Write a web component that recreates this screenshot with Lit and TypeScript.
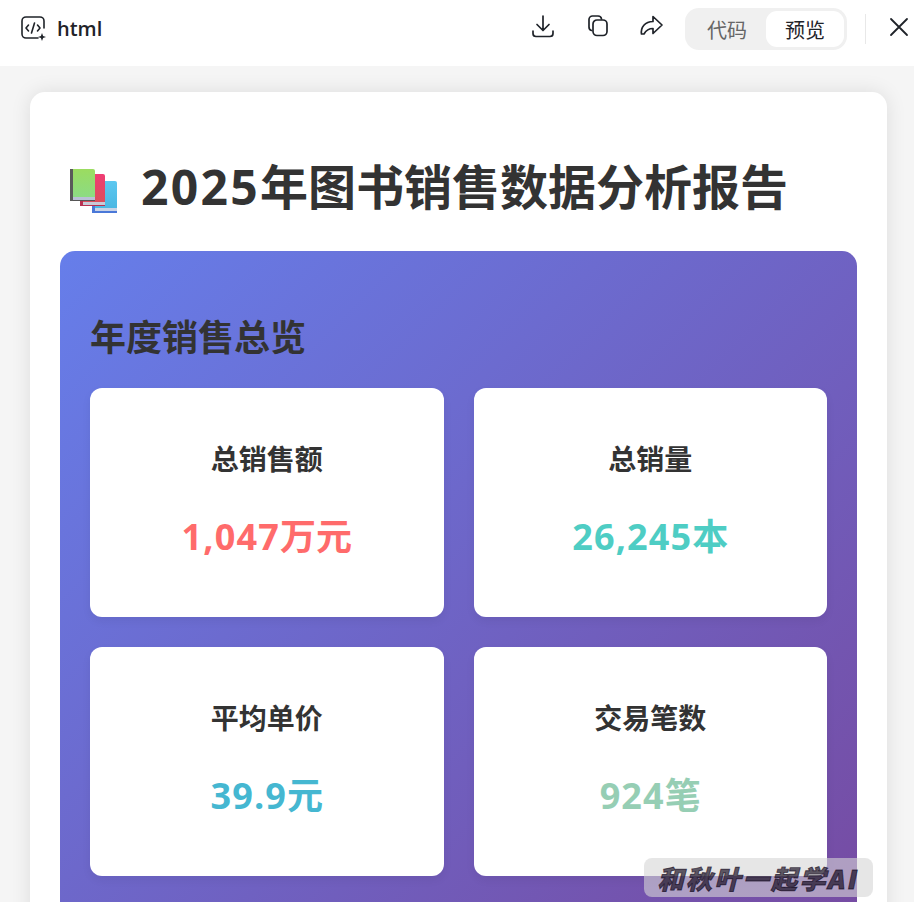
import { LitElement, html, css } from "lit";
import { customElement } from "lit/decorators.js";

const stats = [
  { label: "总销售额", num: "1,047", unit: "万元", color: "#ff6b6b" },
  { label: "总销量", num: "26,245", unit: "本", color: "#4ecdc4" },
  { label: "平均单价", num: "39.9", unit: "元", color: "#45b7d1" },
  { label: "交易笔数", num: "924", unit: "笔", color: "#96ceb4" },
];

@customElement("app-root")
export class AppRoot extends LitElement {
  static styles = css`
    :host {
      display: block;
      height: 902px;
      overflow: hidden;
      position: relative;
      background: #f5f5f5;
      font-family: "Open Sans", "Noto Sans CJK SC", sans-serif;
      color: #333;
    }
    .bar {
      height: 66px;
      background: #fff;
      display: flex;
      align-items: center;
      padding: 0 2px 8px 20px;
      box-sizing: border-box;
    }
    .file {
      display: flex;
      align-items: center;
      gap: 11px;
      font-size: 20px;
      font-weight: 600;
      color: #1f2329;
      flex: 1;
      padding-bottom: 2px;
    }
    .file svg { width: 26px; height: 26px; display: block; }
    .tools { display: flex; align-items: center; }
    .ic { width: 26px; height: 26px; display: block; fill: none; stroke: #1f2329; stroke-width: 1.7; stroke-linecap: round; stroke-linejoin: round; margin-bottom: 6px; }
    .dl { margin-right: 29px; }
    .cp { margin-right: 27px; }
    .sh { margin-right: 21px; }
    .seg {
      display: flex;
      background: #f0f0f0;
      border-radius: 14px;
      padding: 3px;
      height: 42px;
      box-sizing: border-box;
      width: 162px;
    }
    .seg span {
      flex: 1;
      display: flex;
      align-items: center;
      justify-content: center;
      font-size: 20px;
      font-family: "Noto Sans CJK SC", sans-serif;
      font-weight: 400;
      color: #666;
      border-radius: 11px;
    }
    .seg span.on { background: #fff; color: #1f2329; flex: 0 0 78px; }
    .sep { width: 1px; height: 30px; background: #e8e8e8; margin: 0 28px 0 18px; }
    .x { width: 26px; height: 26px; fill: none; stroke: #1f2329; stroke-width: 1.8; stroke-linecap: round; display: block; margin: 0 0 4px -8px; }
    .wrap { padding: 26px 27px 0 30px; }
    .card {
      background: #fff;
      border-radius: 15px;
      box-shadow: 0 0 20px rgba(0, 0, 0, 0.1);
      padding: 30px;
      height: 900px;
      box-sizing: border-box;
    }
    h1 {
      margin: 29px 0 28px;
      display: flex;
      align-items: center;
      gap: 22px;
      font-size: 48px;
      line-height: 72px;
      font-weight: 700;
      color: #333;
      padding-left: 10px;
    }
    h1 svg { width: 50px; height: 50px; display: block; flex: none; margin: 12px -1px 0 0; }
    .n { letter-spacing: 0.032em; }
    h1 .n { letter-spacing: 0.048em; }
    .panel {
      background: linear-gradient(135deg, #667eea 0%, #764ba2 100%);
      border-radius: 15px;
      padding: 30px 30px 45px;
    }
    h2 {
      margin: 0 0 23px;
      padding-top: 30px;
      font-size: 36px;
      line-height: 54px;
      font-weight: 700;
      color: #333;
    }
    .grid { display: grid; grid-template-columns: 1fr 1fr; gap: 30px; }
    .stat {
      background: #fff;
      border-radius: 12px;
      height: 229px;
      box-sizing: border-box;
      box-shadow: 0 4px 10px rgba(0, 0, 0, 0.06);
      display: flex;
      flex-direction: column;
      align-items: center;
      padding-top: 50px;
    }
    .label { font-size: 28px; font-weight: 700; line-height: 42px; color: #333; }
    .value { font-size: 36px; font-weight: 700; line-height: 54px; margin-top: 30px; }
    .mark {
      position: absolute;
      left: 644px;
      top: 858px;
      width: 229px;
      height: 39px;
      border-radius: 8px;
      background: rgba(213, 213, 213, 0.6);
      display: flex;
      align-items: center;
      justify-content: center;
      font-size: 26px;
      font-weight: 900;
      font-style: italic;
      letter-spacing: 2.4px;
      color: rgba(10, 0, 20, 0.64);
      -webkit-text-stroke: 0.9px rgba(10, 0, 20, 0.64);
      white-space: nowrap;
    }
  `;

  render() {
    return html`
      <div class="bar">
        <div class="file">
          <svg viewBox="0 0 26 26" fill="none" stroke="#1f2329" stroke-width="1.6" stroke-linecap="round" stroke-linejoin="round">
            <path d="M24 13V6a4 4 0 0 0-4-4H6a4 4 0 0 0-4 4v13a4 4 0 0 0 4 4h12" />
            <path d="M8.500 10 6 13l2.500 3M17.500 10l2.500 3-2.500 3M14.500 8l-3 10" />
            <path d="M22 18l1.100 2.900 2.900 1.100-2.900 1.100-1.100 2.900-1.100-2.900-2.900-1.100 2.900-1.100z" fill="#1f2329" stroke="none" />
          </svg>
          html
        </div>
        <div class="tools">
          <svg class="ic dl" viewBox="0 0 26 26"><path d="M13 3v14M7 11.500l6 6 6-6M3 18v2.500A3 3 0 0 0 6 23.500h14a3 3 0 0 0 3-3V18" /></svg>
          <svg class="ic cp" viewBox="0 0 26 26"><path d="M6.500 17.500A3.500 3.500 0 0 1 4 14V6.500A3.500 3.500 0 0 1 7.500 3H13a3.500 3.500 0 0 1 3.500 3" /><rect x="8" y="7" width="14" height="15.500" rx="4" /></svg>
          <svg class="ic sh" viewBox="0 0 26 26"><path d="M15 3.500 24 12l-9 8.500v-5c-4.500 0-7 2-9 5.500H3.500C2.500 14.500 7 8.500 15 8.500z" /></svg>
          <div class="seg"><span>代码</span><span class="on">预览</span></div>
          <div class="sep"></div>
          <svg class="x" viewBox="0 0 26 26"><path d="M5 5l16 16M21 5 5 21" /></svg>
        </div>
      </div>
      <div class="wrap">
        <div class="card">
          <h1>
            <svg viewBox="0 0 50 50">
              <defs>
                <linearGradient id="gr" x1="0" y1="0" x2="0" y2="1"><stop offset="0" stop-color="#9bdc60" /><stop offset="1" stop-color="#8adb88" /></linearGradient>
                <linearGradient id="rd" x1="0" y1="0" x2="0" y2="1"><stop offset="0" stop-color="#f03c74" /><stop offset="1" stop-color="#d85058" /></linearGradient>
                <linearGradient id="bl" x1="0" y1="0" x2="0" y2="1"><stop offset="0" stop-color="#5cc8f0" /><stop offset="1" stop-color="#48b4e0" /></linearGradient>
              </defs>
              <rect x="22" y="13" width="25" height="32" rx="2" fill="url(#bl)" />
              <rect x="22" y="40" width="25" height="3" fill="#c9d3e6" />
              <rect x="22" y="43" width="25" height="2" fill="#4a78d8" />
              <rect x="22" y="13" width="3" height="32" fill="#4a78d8" />
              <rect x="10" y="6" width="25" height="32" rx="2" fill="url(#rd)" />
              <rect x="10" y="34" width="25" height="3" fill="#c9c9d6" />
              <rect x="10" y="37" width="25" height="1" fill="#b83050" />
              <rect x="10" y="6" width="3" height="32" fill="#b83050" />
              <rect x="0" y="1" width="25" height="32" rx="2" fill="url(#gr)" />
              <rect x="0" y="29" width="25" height="3" fill="#b9bfd6" />
              <rect x="0" y="32" width="25" height="1" fill="#555" />
              <rect x="0" y="1" width="3" height="32" fill="#5a5a5a" />
            </svg>
            <span><span class="n">2025</span>年图书销售数据分析报告</span>
          </h1>
          <div class="panel">
            <h2>年度销售总览</h2>
            <div class="grid">
              ${stats.map(
                (s) => html`<div class="stat">
                  <div class="label">${s.label}</div>
                  <div class="value" style="color:${s.color}"><span class="n">${s.num}</span>${s.unit}</div>
                </div>`
              )}
            </div>
          </div>
        </div>
      </div>
      <div class="mark">和秋叶一起学AI</div>
    `;
  }
}
